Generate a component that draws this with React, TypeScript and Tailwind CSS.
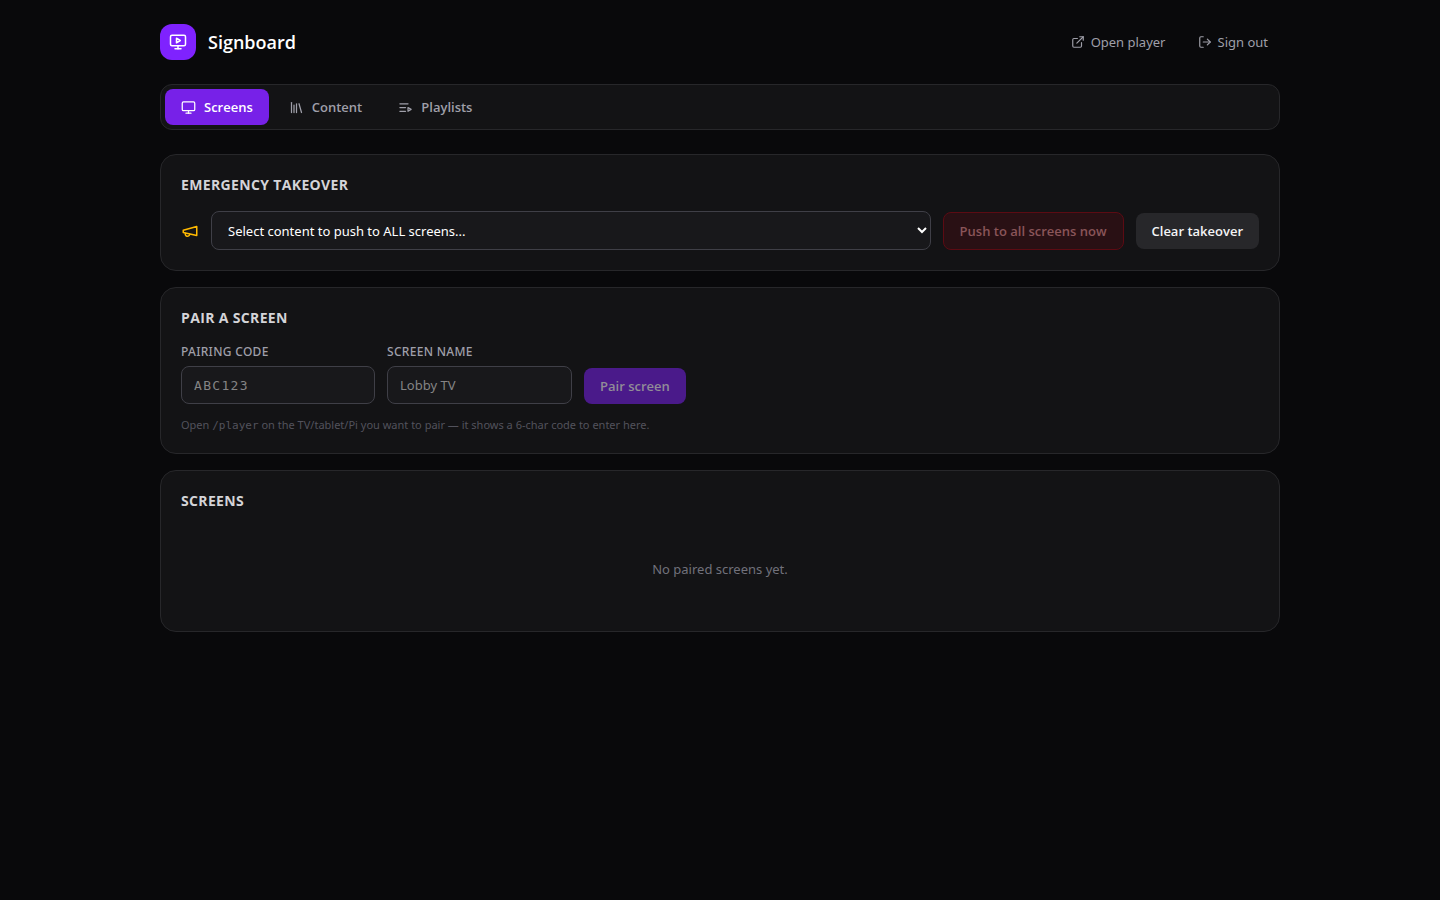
import type { ReactNode } from "react";
import { ExternalLink, Library, LogOut, Monitor } from "lucide-react";

interface IconProps {
  size: number;
  className?: string;
  children?: ReactNode;
}

function Icon({ size, className, children }: IconProps) {
  return (
    <svg
      className={className}
      width={size}
      height={size}
      viewBox="0 0 24 24"
      fill="none"
      stroke="currentColor"
      strokeWidth="2"
      strokeLinecap="round"
      strokeLinejoin="round"
      aria-hidden="true"
    >
      {children}
    </svg>
  );
}

function MonitorPlay({ size }: IconProps) {
  return (
    <Icon size={size}>
      <path d="m10 7 5 3-5 3Z" />
      <rect width="20" height="14" x="2" y="3" rx="2" />
      <path d="M12 17v4" />
      <path d="M8 21h8" />
    </Icon>
  );
}

function ListVideo({ size }: IconProps) {
  return (
    <Icon size={size}>
      <path d="M12 12H3" />
      <path d="M16 6H3" />
      <path d="M12 18H3" />
      <path d="m16 12 5 3-5 3v-6Z" />
    </Icon>
  );
}

const tabs = [
  { id: "screens", label: "Screens", icon: Monitor },
  { id: "content", label: "Content", icon: Library },
  { id: "playlists", label: "Playlists", icon: ListVideo },
];

const inputClass =
  "block h-[38px] rounded-lg border border-zinc-700 bg-zinc-900 px-3 text-[13px] text-white placeholder:text-[#848485] focus:border-violet-500 focus:outline-none";

const labelClass =
  "mb-1.5 block text-xs leading-4 font-medium tracking-wide text-zinc-400 uppercase";

function Card({ title, children }: { title: string; children: ReactNode }) {
  return (
    <section className="rounded-2xl border border-zinc-800 bg-[#131315] p-5">
      <h2 className="mb-4 font-['Open_Sans',sans-serif] text-sm leading-5 font-bold tracking-wide text-zinc-300 uppercase">
        {title}
      </h2>
      {children}
    </section>
  );
}

export default function App() {
  return (
    <div className="min-h-screen bg-zinc-950 font-['Noto_Sans',sans-serif] text-[13px] leading-5 text-white">
      <div className="mx-auto max-w-6xl px-4 py-6">
        <header className="mb-6 flex items-center justify-between">
          <div className="flex items-center gap-3">
            <div className="flex size-9 items-center justify-center rounded-xl bg-violet-600">
              <MonitorPlay size={18} />
            </div>
            <h1 className="font-['Open_Sans',sans-serif] text-lg leading-7 font-semibold">Signboard</h1>
          </div>
          <div className="flex items-center gap-2 text-zinc-400">
            <a href="/player" className="flex items-center gap-1.5 px-3 py-2 hover:text-white">
              <ExternalLink size={14} />
              Open player
            </a>
            <button type="button" className="flex items-center gap-1.5 px-3 py-2 hover:text-white">
              <LogOut size={14} />
              Sign out
            </button>
          </div>
        </header>

        <nav className="mb-6 flex gap-1 rounded-xl border border-zinc-800 bg-[#131315] p-1 font-['Open_Sans',sans-serif]">
          {tabs.map(({ id, label, icon: TabIcon }) => (
            <button
              key={id}
              type="button"
              className={
                id === "screens"
                  ? "flex items-center gap-2 rounded-lg bg-[#7721e8] px-4 py-2 font-semibold text-white"
                  : "flex items-center gap-2 rounded-lg px-4 py-2 font-semibold text-zinc-400 hover:text-white"
              }
            >
              <TabIcon size={15} />
              {label}
            </button>
          ))}
        </nav>

        <main className="space-y-4">
          <Card title="Emergency takeover">
            <div className="flex items-center gap-3">
              <Icon size={18} className="shrink-0 text-amber-400">
                <path d="m3 11 18-5v12L3 14v-3z" />
                <path d="M11.6 16.8a3 3 0 1 1-5.8-1.6" />
              </Icon>
              <select
                aria-label="Takeover content"
                className="h-[39px] min-w-0 flex-1 rounded-lg border border-zinc-700 bg-zinc-900 px-3 text-[13px] text-white"
              >
                <option>Select content to push to ALL screens...</option>
              </select>
              <button
                type="button"
                disabled
                className="rounded-lg border border-[#5c0b13] bg-[#291014] px-4 py-2 font-['Open_Sans',sans-serif] font-semibold text-[#8a5559]"
              >
                Push to all screens now
              </button>
              <button
                type="button"
                className="rounded-lg bg-zinc-800 px-4 py-2 font-['Open_Sans',sans-serif] font-semibold text-zinc-100"
              >
                Clear takeover
              </button>
            </div>
          </Card>

          <Card title="Pair a screen">
            <form className="flex flex-wrap items-end gap-3">
              <div>
                <label htmlFor="code" className={labelClass}>
                  Pairing code
                </label>
                <input
                  id="code"
                  placeholder="ABC123"
                  maxLength={6}
                  className={`${inputClass} w-[194px] font-['DejaVu_Sans_Mono',monospace] tracking-widest uppercase`}
                />
              </div>
              <div>
                <label htmlFor="name" className={labelClass}>
                  Screen name
                </label>
                <input id="name" placeholder="Lobby TV" className={`${inputClass} w-[185px]`} />
              </div>
              <button
                type="submit"
                disabled
                className="rounded-lg bg-[#4a1a8a] px-4 py-2 font-['Open_Sans',sans-serif] font-semibold text-[#918c97]"
              >
                Pair screen
              </button>
            </form>
            <p className="mt-3 text-[11px] leading-[17px] text-zinc-600">
              Open{" "}
              <code className="font-['DejaVu_Sans_Mono',monospace] leading-none">/player</code> on
              the TV/tablet/Pi you want to pair — it shows a 6-char code to enter here.
            </p>
          </Card>

          <Card title="Screens">
            <p className="py-8 text-center text-zinc-500">No paired screens yet.</p>
          </Card>
        </main>
      </div>
    </div>
  );
}
